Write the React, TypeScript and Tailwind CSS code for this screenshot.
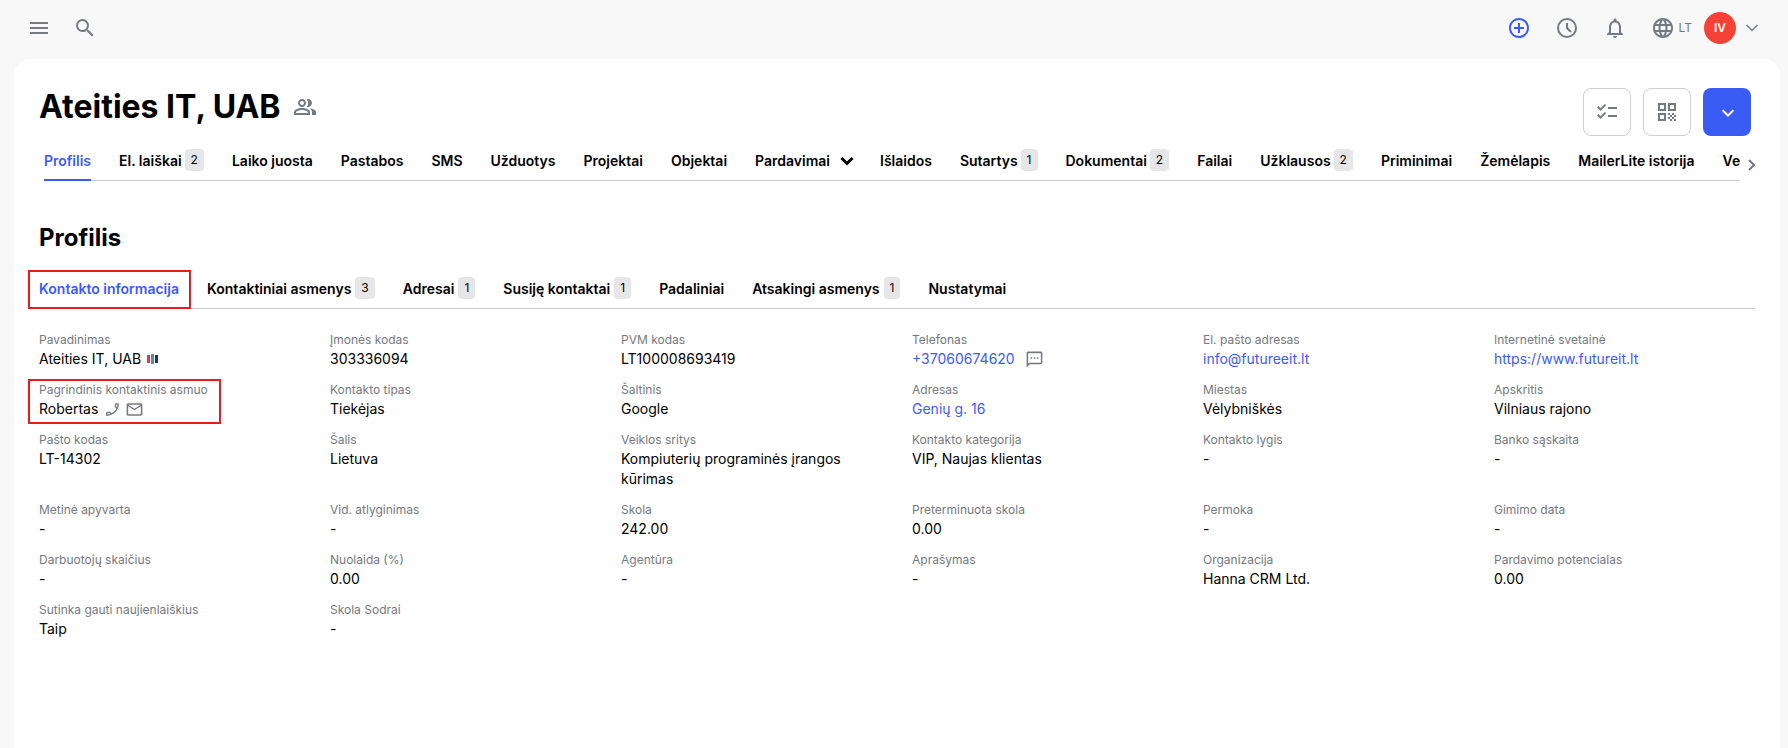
import type { ReactNode } from 'react';
import {
  MdAddCircleOutline,
  MdChecklist,
  MdExpandMore,
  MdLanguage,
  MdMailOutline,
  MdMenu,
  MdNotificationsNone,
  MdOutlineCall,
  MdOutlinePeopleAlt,
  MdOutlineSms,
  MdQrCode,
  MdSearch,
} from 'react-icons/md';

interface Tab {
  label: string;
  count?: number;
  menu?: boolean;
}

interface Field {
  label: string;
  value: string;
  href?: string;
  extra?: ReactNode;
  marked?: boolean;
}

const MAIN_TABS: Tab[] = [
  { label: 'Profilis' },
  { label: 'El. laiškai', count: 2 },
  { label: 'Laiko juosta' },
  { label: 'Pastabos' },
  { label: 'SMS' },
  { label: 'Užduotys' },
  { label: 'Projektai' },
  { label: 'Objektai' },
  { label: 'Pardavimai', menu: true },
  { label: 'Išlaidos' },
  { label: 'Sutartys', count: 1 },
  { label: 'Dokumentai', count: 2 },
  { label: 'Failai' },
  { label: 'Užklausos', count: 2 },
  { label: 'Priminimai' },
  { label: 'Žemėlapis' },
  { label: 'MailerLite istorija' },
  { label: 'Ve' },
];

const PROFILE_TABS: Tab[] = [
  { label: 'Kontakto informacija' },
  { label: 'Kontaktiniai asmenys', count: 3 },
  { label: 'Adresai', count: 1 },
  { label: 'Susiję kontaktai', count: 1 },
  { label: 'Padaliniai' },
  { label: 'Atsakingi asmenys', count: 1 },
  { label: 'Nustatymai' },
];

const RegistryIcon = () => (
  <svg width="11" height="10" viewBox="0 0 11 10" aria-hidden="true">
    <rect x="0" y="1" width="3" height="8" fill="#e63946" />
    <rect x="4" y="0" width="3" height="10" fill="#5b8aa6" />
    <rect x="8" y="1" width="3" height="8" fill="#1d3557" />
  </svg>
);

const ClockIcon = () => (
  <svg width="24" height="24" viewBox="0 0 24 24" fill="none" stroke="currentColor" strokeWidth="2" aria-hidden="true">
    <circle cx="12" cy="12" r="9" />
    <path d="M12 7v5l4 4" />
  </svg>
);

const FIELDS: Field[] = [
  { label: 'Pavadinimas', value: 'Ateities IT, UAB', extra: <RegistryIcon /> },
  { label: 'Įmonės kodas', value: '303336094' },
  { label: 'PVM kodas', value: 'LT100008693419' },
  {
    label: 'Telefonas',
    value: '+37060674620',
    href: 'tel:+37060674620',
    extra: (
      <button aria-label="Siųsti SMS" className="ml-1 text-[#757980]">
        <MdOutlineSms size={19} />
      </button>
    ),
  },
  { label: 'El. pašto adresas', value: 'info@futureeit.lt', href: 'mailto:info@futureeit.lt' },
  { label: 'Internetinė svetainė', value: 'https://www.futureit.lt', href: 'https://www.futureit.lt' },
  {
    label: 'Pagrindinis kontaktinis asmuo',
    value: 'Robertas',
    marked: true,
    extra: (
      <span className="flex items-center gap-1 text-[#757980]">
        <button aria-label="Skambinti">
          <MdOutlineCall size={17} className="-scale-x-100" />
        </button>
        <button aria-label="Rašyti laišką">
          <MdMailOutline size={19} />
        </button>
      </span>
    ),
  },
  { label: 'Kontakto tipas', value: 'Tiekėjas' },
  { label: 'Šaltinis', value: 'Google' },
  { label: 'Adresas', value: 'Genių g. 16', href: '#adresas' },
  { label: 'Miestas', value: 'Vėlybniškės' },
  { label: 'Apskritis', value: 'Vilniaus rajono' },
  { label: 'Pašto kodas', value: 'LT-14302' },
  { label: 'Šalis', value: 'Lietuva' },
  { label: 'Veiklos sritys', value: 'Kompiuterių programinės įrangos kūrimas' },
  { label: 'Kontakto kategorija', value: 'VIP, Naujas klientas' },
  { label: 'Kontakto lygis', value: '-' },
  { label: 'Banko sąskaita', value: '-' },
  { label: 'Metinė apyvarta', value: '-' },
  { label: 'Vid. atlyginimas', value: '-' },
  { label: 'Skola', value: '242.00' },
  { label: 'Preterminuota skola', value: '0.00' },
  { label: 'Permoka', value: '-' },
  { label: 'Gimimo data', value: '-' },
  { label: 'Darbuotojų skaičius', value: '-' },
  { label: 'Nuolaida (%)', value: '0.00' },
  { label: 'Agentūra', value: '-' },
  { label: 'Aprašymas', value: '-' },
  { label: 'Organizacija', value: 'Hanna CRM Ltd.' },
  { label: 'Pardavimo potencialas', value: '0.00' },
  { label: 'Sutinka gauti naujienlaiškius', value: 'Taip' },
  { label: 'Skola Sodrai', value: '-' },
];

const Badge = ({ count }: { count: number }) => (
  <span className="-mt-0.5 rounded bg-[#e6e6e8] px-1.5 text-xs leading-[22px] font-normal text-black">
    {count}
  </span>
);

const TabLabel = ({ tab }: { tab: Tab }) => (
  <>
    {tab.label}
    {tab.count !== undefined && <Badge count={tab.count} />}
    {tab.menu && (
      <svg width="14" height="10" viewBox="0 0 14 10" className="-mr-0.5 ml-[7px]" aria-hidden="true">
        <path d="M1.5 2l5.5 5.5L12.5 2" fill="none" stroke="currentColor" strokeWidth="3" />
      </svg>
    )}
  </>
);

const TopBar = () => (
  <header className="flex h-[59px] items-center justify-between pr-7 pb-1 pl-[27px]">
    <div className="flex items-center gap-[22px] text-[#757980]">
      <button aria-label="Meniu">
        <MdMenu size={24} />
      </button>
      <button aria-label="Paieška">
        <MdSearch size={24} />
      </button>
    </div>
    <div className="flex items-center gap-6 text-[#757980]">
      <button aria-label="Pridėti" className="text-[#3b5bf5]">
        <MdAddCircleOutline size={24} />
      </button>
      <button aria-label="Istorija">
        <ClockIcon />
      </button>
      <button aria-label="Pranešimai">
        <MdNotificationsNone size={24} />
      </button>
      <div className="flex items-center">
        <button className="flex items-center gap-1 text-xs">
          <MdLanguage size={24} />
          LT
        </button>
        <button aria-label="Paskyra" className="ml-3 flex items-center gap-2">
          <span className="flex size-8 items-center justify-center rounded-full bg-[#f44336] text-xs font-semibold text-white">
            IV
          </span>
          <svg width="16" height="16" viewBox="0 0 16 16" aria-hidden="true">
            <path d="M2.5 5L8 10.5 13.5 5" fill="none" stroke="currentColor" strokeWidth="1.5" />
          </svg>
        </button>
      </div>
    </div>
  </header>
);

const FieldItem = ({ field }: { field: Field }) => (
  <div className="relative h-fit">
    {field.marked && (
      <span className="pointer-events-none absolute -top-[3px] -left-[11px] h-[45px] w-[193px] border-2 border-[#e81c1c]" />
    )}
    <dt className="text-xs leading-4 text-[#757980]">{field.label}</dt>
    <dd className="mt-px flex min-h-5 items-center gap-1.5 text-sm leading-5">
      {field.href ? (
        <a href={field.href} className="text-[#3b5bf5]">
          {field.value}
        </a>
      ) : (
        <span>{field.value}</span>
      )}
      {field.extra}
    </dd>
  </div>
);

export default function App() {
  return (
    <div className="flex min-h-screen flex-col bg-[#f8f8f8] font-['Inter',sans-serif] text-black">
      <TopBar />

      <main className="mr-2 ml-3.5 flex-1 rounded-t-2xl bg-white pr-[25px] pb-8 pl-[25px]">
        {/* Title and actions */}
        <div className="flex items-start justify-between pt-[29px] pr-1">
          <div className="flex items-center gap-3">
            <h1 className="text-[32px] leading-[38px] font-bold">Ateities IT, UAB</h1>
            <MdOutlinePeopleAlt size={24} className="text-[#757980]" />
          </div>
          <div className="flex gap-3 text-[#757980]">
            <button
              aria-label="Užduočių sąrašas"
              className="flex size-12 items-center justify-center rounded-lg border border-[#cfcfd2]"
            >
              <MdChecklist size={24} />
            </button>
            <button
              aria-label="QR kodas"
              className="flex size-12 items-center justify-center rounded-lg border border-[#cfcfd2]"
            >
              <MdQrCode size={24} />
            </button>
            <button
              aria-label="Veiksmai"
              className="flex size-12 items-center justify-center rounded-lg bg-[#3b5bf5] pt-0.5 pl-0.5 text-white"
            >
              <MdExpandMore size={24} />
            </button>
          </div>
        </div>

        {/* Main tabs */}
        <div className="flex items-center pl-[5px]">
          <nav className="flex h-[45px] min-w-0 flex-1 gap-7 overflow-hidden shadow-[inset_0_-1px_0_#c9cacf]">
            {MAIN_TABS.map((tab, i) => (
              <button
                key={tab.label}
                className={
                  i === 0
                    ? 'flex shrink-0 items-center border-b-2 border-[#3b5bf5] pt-1.5 text-sm font-semibold text-[#3b5bf5]'
                    : 'flex shrink-0 items-center gap-[3px] pt-1 text-sm font-semibold'
                }
              >
                <TabLabel tab={tab} />
              </button>
            ))}
          </nav>
          <button aria-label="Kiti skirtukai" className="pt-3 pl-2 text-[#757980]">
            <svg width="7" height="14" viewBox="0 0 7 14" aria-hidden="true">
              <path d="M1 2l5 5-5 5" fill="none" stroke="currentColor" strokeWidth="2" />
            </svg>
          </button>
        </div>

        <h2 className="mt-[41px] text-2xl leading-8 font-bold">Profilis</h2>

        {/* Profile tabs */}
        <nav className="relative mt-4 flex h-[39px] gap-7 border-b border-[#c9cacf]">
          <span className="pointer-events-none absolute top-0 -left-[11px] h-[39px] w-[163px] border-2 border-[#e81c1c]" />
          {PROFILE_TABS.map((tab, i) => (
            <button
              key={tab.label}
              className={
                i === 0
                  ? 'flex items-center text-sm font-semibold text-[#3b5bf5]'
                  : 'flex items-center gap-1 text-sm font-semibold'
              }
            >
              <TabLabel tab={tab} />
            </button>
          ))}
        </nav>

        <dl className="mt-[23px] grid grid-cols-6 gap-x-[30px] gap-y-[13px]">
          {FIELDS.map((field) => (
            <FieldItem key={field.label} field={field} />
          ))}
        </dl>
      </main>
    </div>
  );
}
